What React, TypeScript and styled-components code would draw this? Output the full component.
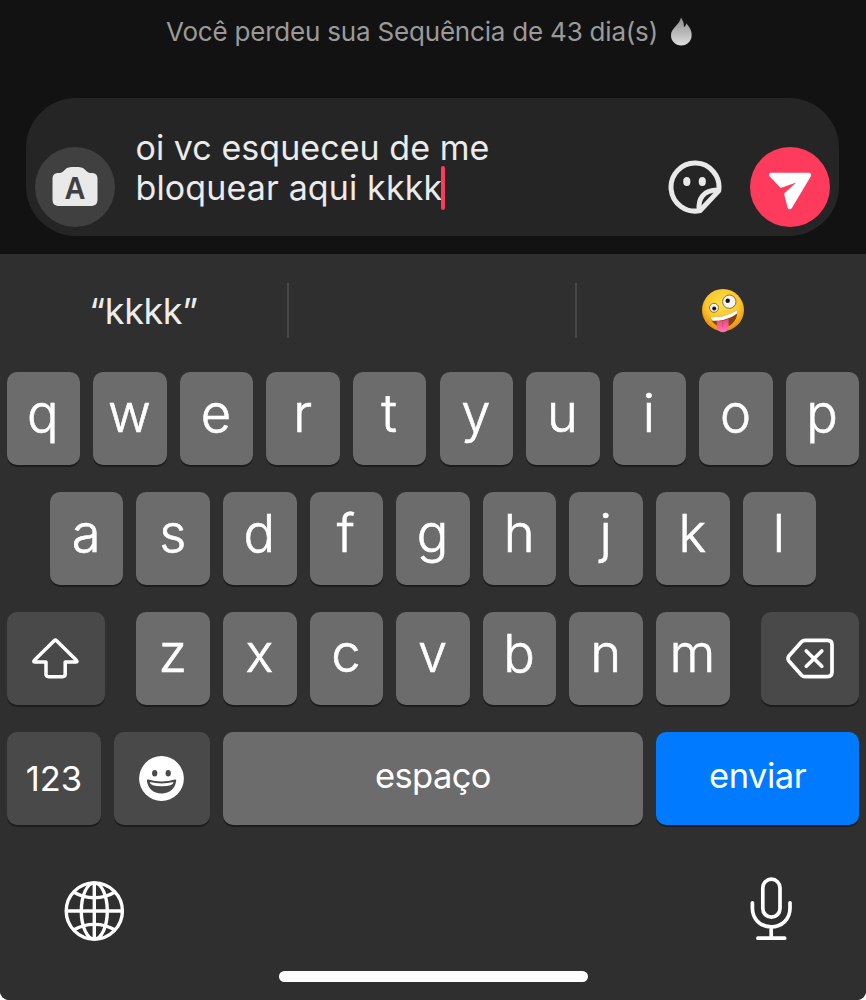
import React from "react";
import styled, { createGlobalStyle } from "styled-components";

const GlobalStyle = createGlobalStyle`
  *, *::before, *::after { box-sizing: border-box; }
  body { margin: 0; background: #fff; }
  svg { display: block; flex: none; }
`;

const Screen = styled.div`
  width: 866px;
  height: 1000px;
  display: flex;
  flex-direction: column;
  overflow: hidden;
  background: #121212;
  border-radius: 0 0 9px 9px;
  font-family: Inter, "Liberation Sans", sans-serif;
`;

const Chat = styled.section`
  height: 254px;
  flex: none;
  display: flex;
  flex-direction: column;
`;

const StreakNotice = styled.div`
  height: 98px;
  padding: 16px 0 0 166px;
  display: flex;
  align-items: flex-start;
  gap: 12px;
  color: #9a9a9a;
`;

const StreakText = styled.span`
  width: 492px;
  font-size: 26px;
  line-height: 32px;
  letter-spacing: -0.2px;
  white-space: nowrap;
`;

const Composer = styled.div`
  height: 138px;
  margin: 0 27px 0 26px;
  padding: 0 9px 9px 9px;
  display: flex;
  align-items: flex-end;
  border-radius: 50px;
  background: #252525;
`;

const RoundButton = styled.button<{ $color: string }>`
  width: 80px;
  height: 80px;
  flex: none;
  display: grid;
  place-items: center;
  padding: 0;
  border: 0;
  border-radius: 50%;
  background: ${(p) => p.$color};
`;

const Message = styled.div`
  flex: 1;
  height: 99px;
  padding-left: 20.5px;
  color: #ebebeb;
  font-size: 34px;
  line-height: 40px;
  white-space: nowrap;
`;

const Line = styled.div<{ $spacing: number }>`
  display: flex;
  align-items: center;
  height: 40px;
  letter-spacing: ${(p) => p.$spacing}px;
`;

const Caret = styled.i`
  width: 4px;
  height: 44px;
  margin-left: -1.5px;
  border-radius: 2px;
  background: #f93b5e;
`;

const StickerButton = styled.button`
  width: 56px;
  height: 80px;
  margin-right: 27.5px;
  display: grid;
  place-items: center;
  padding: 0;
  border: 0;
  background: none;
`;

const Keyboard = styled.section`
  flex: 1;
  display: flex;
  flex-direction: column;
  background: #2f2f2f;
`;

const Suggestions = styled.div`
  height: 118px;
  padding-top: 29px;
  display: grid;
  grid-template-columns: 289px 288px 289px;
`;

const Suggestion = styled.div`
  height: 55px;
  display: flex;
  align-items: center;
  justify-content: center;
  border-right: 2px solid #474747;
  color: #ececec;
  font-size: 36px;
  letter-spacing: -0.4px;
  &:last-child { border-right: 0; padding-left: 3px; }
`;

const Keys = styled.div`
  display: flex;
  flex-direction: column;
  gap: 27px;
`;

const Row = styled.div`
  display: flex;
  justify-content: center;
  gap: 13.1px;
`;

const Key = styled.button<{ $width?: number; $tone?: "light" | "dark" | "blue" }>`
  width: ${(p) => p.$width ?? 73.5}px;
  height: 93px;
  flex: none;
  display: flex;
  align-items: center;
  justify-content: center;
  padding: 0;
  border: 0;
  border-radius: 10px;
  background: ${(p) => ({ light: "#6c6c6c", dark: "#494949", blue: "#007aff" })[p.$tone ?? "light"]};
  box-shadow: 0 2px 0 #1d1d1d;
  color: #fff;
  font-family: inherit;
`;

const Letter = styled.span`
  padding: 0 1px 12px 0;
  font-size: 52.5px;
  font-weight: 300;
  line-height: 64px;
  -webkit-text-stroke: 0.6px #fff;
`;

const Label = styled.span<{ $lift: number; $spacing?: number }>`
  padding-bottom: ${(p) => p.$lift}px;
  font-size: 34.5px;
  line-height: 42px;
  letter-spacing: ${(p) => p.$spacing ?? 0}px;
`;

const LetterGroup = styled.div`
  display: flex;
  gap: 13.1px;
  margin: 0 18.8px;
`;

const Footer = styled.div`
  height: 146px;
  padding: 50px 72px 0 62px;
  display: flex;
  justify-content: space-between;
`;

const HomeBar = styled.div`
  width: 309px;
  height: 11px;
  margin: 0 auto;
  border-radius: 6px;
  background: #fff;
`;

const Flame = () => (
  <svg width="22" height="30" viewBox="670 16.5 22 30">
    <defs>
      <linearGradient id="flame" x1="0" y1="0" x2="0" y2="1">
        <stop offset="0" stopColor="#8d8d8d" />
        <stop offset="0.55" stopColor="#b9b9b9" />
        <stop offset="1" stopColor="#dedede" />
      </linearGradient>
    </defs>
    <path
      d="M681 18C682.5 20.5 684.2 23 683.9 27.6C685.4 27 686 25.6 686.2 23.8C689.6 27.5 691.7 31 691.7 35.5C691.7 41.8 687.2 46 681.3 46C675.4 46 671 41.8 671 35.8C671 28.5 679.5 25.5 681 18Z"
      fill="url(#flame)"
    />
  </svg>
);

const Camera = () => (
  <svg width="48" height="42" viewBox="51.5 166 48 42">
    <path
      d="M59 173C63 173 64 171 66 169.2C68 167.3 70 167 75.5 167C81 167 83 167.3 85 169.2C87 171 88 173 92 173C96 173 98 175 98 179V199C98 204 96 206 91 206H60C55 206 53 204 53 199V179C53 175 55 173 59 173Z"
      fill="#e9e9e9"
    />
    <text x="75.6" y="198.6" fontSize="30.5" fontWeight="800" textLength="21" lengthAdjust="spacingAndGlyphs" textAnchor="middle" fill="#404040">A</text>
  </svg>
);

const Sticker = () => (
  <svg width="56" height="56" viewBox="667 159.5 56 56" fill="none" stroke="#e9e9e9" strokeWidth="5" strokeLinejoin="round">
    <path d="M718.7 191.4A24 24 0 1 0 700.2 211Z" />
    <path d="M699.2 210.5C698 200 702.5 190.2 718.7 190.6" />
    <ellipse cx="686.8" cy="182" rx="3.6" ry="4.5" fill="#e9e9e9" stroke="none" />
    <ellipse cx="702.3" cy="182" rx="3.6" ry="4.5" fill="#e9e9e9" stroke="none" />
  </svg>
);

const Send = () => (
  <svg width="46" height="46" viewBox="767.5 164 46 46">
    <path
      d="M772 172.8H809.2C811.4 172.8 812.3 174.6 811.2 176.4L792.4 208C791.2 210 788.7 209.7 788.1 207.4L784.5 193.4L796.8 182.4L781.3 188L770.2 176.6C768.7 175 769.8 172.8 772 172.8Z"
      fill="#fff"
    />
  </svg>
);

const ZanyFace = () => (
  <svg width="44" height="46" viewBox="701 288 44 46">
    <defs>
      <radialGradient id="skin" cx="0.5" cy="0.35" r="0.65">
        <stop offset="0" stopColor="#ffe04a" />
        <stop offset="0.6" stopColor="#fdc62c" />
        <stop offset="1" stopColor="#e68a0c" />
      </radialGradient>
      <linearGradient id="tongue" x1="0" y1="0" x2="0" y2="1">
        <stop offset="0" stopColor="#e8437f" />
        <stop offset="1" stopColor="#ff77b4" />
      </linearGradient>
    </defs>
    <circle cx="723" cy="310" r="21" fill="url(#skin)" />
    <circle cx="729.3" cy="301.7" r="6.7" fill="#f4f4f4" stroke="#94702f" strokeWidth="1" />
    <circle cx="727.7" cy="300.8" r="2.2" fill="#1b1210" />
    <circle cx="714" cy="307.8" r="4.5" fill="#f4f4f4" stroke="#94702f" strokeWidth="1" />
    <circle cx="714.2" cy="308.6" r="2" fill="#1b1210" />
    <path d="M710.3 317C719 317.8 729 315.8 737.5 309.8C737.8 318 733.5 325.5 726 327C718.5 328.3 712 323.8 710.3 317Z" fill="#85430f" />
    <path d="M710.3 317C719 317.8 729 315.8 737.5 309.8L737.3 313.3C730 319 720.5 321.6 712 320.6Z" fill="#fff" />
    <path d="M716.5 320.8C720 321.3 725 320.5 728.6 318.7V326C728.6 330 726.4 332.2 723 332.2C719.3 332.2 717 330 716.9 326Z" fill="url(#tongue)" />
    <path d="M722.6 321V327" stroke="#d93c78" strokeWidth="0.8" />
  </svg>
);

const Shift = () => (
  <svg width="50" height="44" viewBox="30.8 636.5 50 44" fill="none" stroke="#fff" strokeWidth="3.5" strokeLinejoin="round">
    <path d="M54 640.2Q55.2 639 56.4 640.2L76 659.6Q77.8 661.6 75.8 661.6H65V673.6Q65 676.2 62.4 676.2H48.4Q45.8 676.2 45.8 673.6V661.6H34.6Q32.6 661.6 34.4 659.6Z" />
  </svg>
);

const Backspace = () => (
  <svg width="50" height="44" viewBox="785 636.5 50 44" fill="none" stroke="#fff" strokeWidth="3.7" strokeLinejoin="round" strokeLinecap="round">
    <path d="M805 639.9H827.5Q832 639.9 832 644.4V671.6Q832 676.1 827.5 676.1H805Q803 676.1 801.6 674.7L788.9 660.6Q787.2 658 788.9 655.4L801.6 641.3Q803 639.9 805 639.9Z" />
    <path d="M806.3 650.5L821.8 665.8M821.8 650.5L806.3 665.8" />
  </svg>
);

const Grin = () => (
  <svg width="46" height="46" viewBox="138.8 755.5 46 46">
    <circle cx="161.3" cy="778" r="22.4" fill="#fff" />
    <ellipse cx="154.5" cy="772.7" rx="2.6" ry="3.3" fill="#494949" />
    <ellipse cx="168" cy="772.7" rx="2.6" ry="3.3" fill="#494949" />
    <path d="M148 779Q161.3 783 174.8 779Q176.2 778.8 176 780.3C175 788 169.5 793 161.3 793C153 793 147.7 788 146.7 780.3Q146.5 778.8 148 779Z" fill="#494949" />
    <path d="M149.5 781.5Q161.3 784.3 173.3 781.5Q173 785.8 161.3 785.8Q150 785.8 149.5 781.5Z" fill="#fff" />
  </svg>
);

const Globe = () => (
  <svg width="64" height="64" viewBox="62 875 64 64" overflow="visible" fill="none" stroke="#fff" strokeWidth="3.4">
    <circle cx="94.3" cy="911" r="28.1" />
    <ellipse cx="94.3" cy="911" rx="13" ry="28.1" />
    <path d="M94.3 883V939M66.2 911H122.4" />
    <path d="M74 892.2C86 899.5 102.6 899.5 114.6 892.2M74 929.8C86 922.5 102.6 922.5 114.6 929.8" />
  </svg>
);

const Mic = () => (
  <svg width="46" height="66" viewBox="748.1 875 46 66" fill="none" stroke="#fff" strokeWidth="3.7" strokeLinecap="round">
    <rect x="762.9" y="879.2" width="17.2" height="38" rx="8.6" />
    <path d="M752.5 902.8V908.3C752.5 919 760.5 926.8 771.3 926.8C782.1 926.8 790.1 919 790.1 908.3V902.8M771.3 926.8V938M758 938.2H784.8" />
  </svg>
);

const letterKeys = (letters: string) =>
  letters.split("").map((l) => (
    <Key key={l}>
      <Letter>{l}</Letter>
    </Key>
  ));

export default function App() {
  return (
    <Screen>
      <GlobalStyle />
      <Chat>
        <StreakNotice>
          <StreakText>Você perdeu sua Sequência de 43 dia(s)</StreakText>
          <Flame />
        </StreakNotice>
        <Composer>
          <RoundButton $color="#404040" aria-label="Câmera"><Camera /></RoundButton>
          <Message>
            <Line $spacing={0.05}>oi vc esqueceu de me</Line>
            <Line $spacing={0.13}>bloquear aqui kkkk<Caret /></Line>
          </Message>
          <StickerButton aria-label="Figurinhas"><Sticker /></StickerButton>
          <RoundButton $color="#fe3b5c" aria-label="Enviar"><Send /></RoundButton>
        </Composer>
      </Chat>
      <Keyboard>
        <Suggestions>
          <Suggestion>“kkkk”</Suggestion>
          <Suggestion />
          <Suggestion><ZanyFace /></Suggestion>
        </Suggestions>
        <Keys>
          <Row>{letterKeys("qwertyuiop")}</Row>
          <Row>{letterKeys("asdfghjkl")}</Row>
          <Row>
            <Key $width={97.5} $tone="dark" aria-label="Shift"><Shift /></Key>
            <LetterGroup>{letterKeys("zxcvbnm")}</LetterGroup>
            <Key $width={97.5} $tone="dark" aria-label="Apagar"><Backspace /></Key>
          </Row>
          <Row>
            <Key $width={94} $tone="dark"><Label $lift={0}>123</Label></Key>
            <Key $width={95.6} $tone="dark" aria-label="Emoji"><Grin /></Key>
            <Key $width={420.3}><Label $lift={6} $spacing={-0.6}>espaço</Label></Key>
            <Key $width={202.9} $tone="blue"><Label $lift={6} $spacing={-0.5}>enviar</Label></Key>
          </Row>
        </Keys>
        <Footer>
          <Globe />
          <Mic />
        </Footer>
        <HomeBar />
      </Keyboard>
    </Screen>
  );
}
